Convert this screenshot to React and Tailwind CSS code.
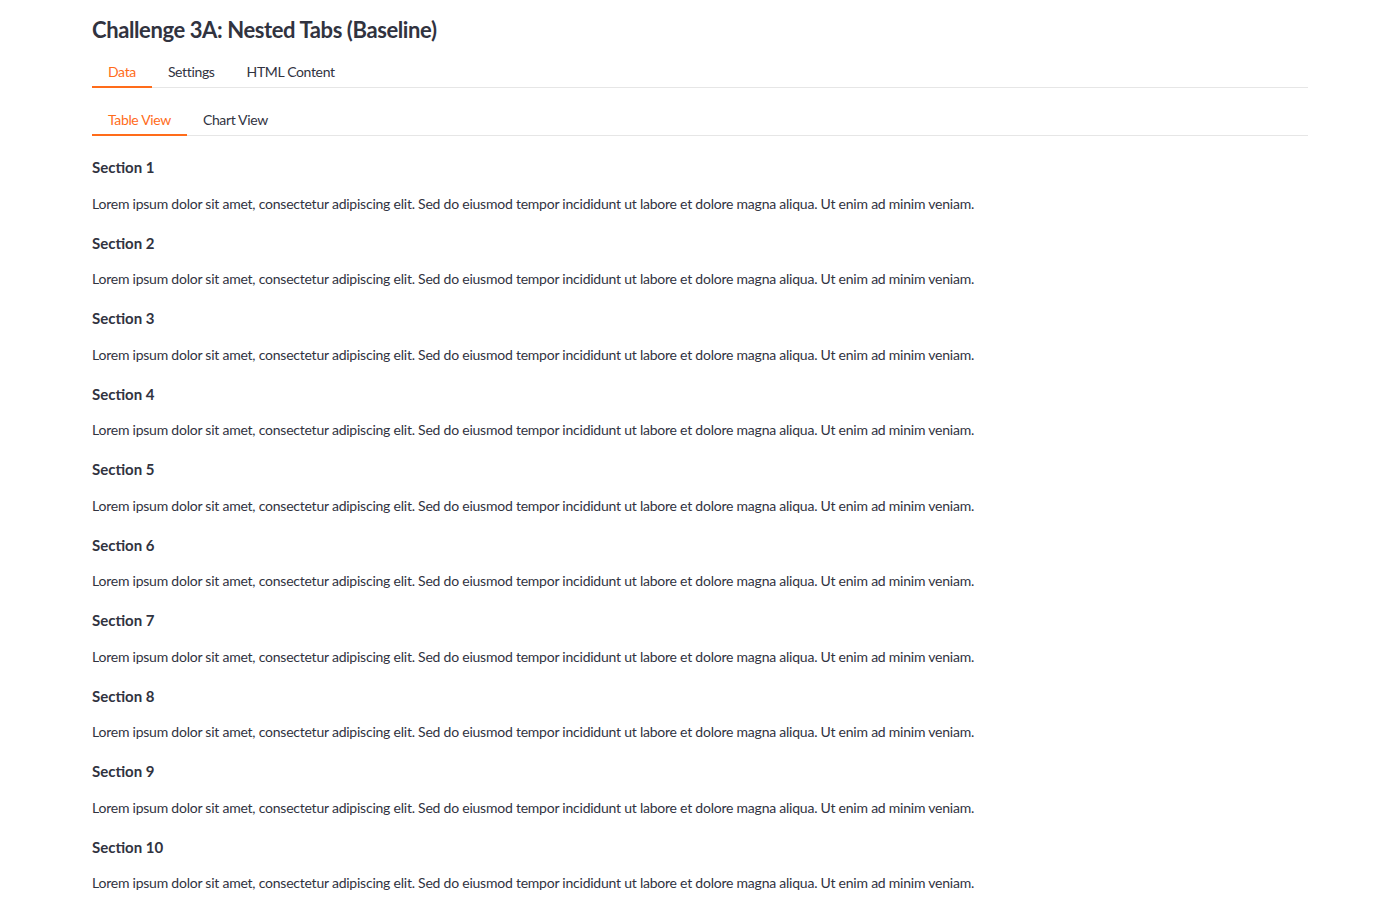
import React, { useState } from 'react';

const LOREM =
  'Lorem ipsum dolor sit amet, consectetur adipiscing elit. Sed do eiusmod tempor incididunt ut labore et dolore magna aliqua. Ut enim ad minim veniam.';

const Tabs = ({ items, active, onChange }) => (
  <div className="flex border-b border-[#e6e6e6]">
    {items.map((item) => (
      <button
        key={item}
        onClick={() => onChange(item)}
        className={
          item === active
            ? 'h-8 px-4 pt-[2px] -mb-px border-b-2 border-[#ff6c1a] text-[#ff6c1a] text-sm tracking-[-0.35px]'
            : 'h-8 px-4 pt-[2px] -mb-px border-b-2 border-transparent text-[#31333f] text-sm tracking-[-0.35px]'
        }
      >
        {item}
      </button>
    ))}
  </div>
);

const App = () => {
  const [tab, setTab] = useState('Data');
  const [sub, setSub] = useState('Table View');
  const sections = Array.from({ length: 10 }, (_, i) => i + 1);

  return (
    <div className="min-h-screen bg-white text-[#31333f] font-['Lato',sans-serif]">
      <div className="mx-[92px] pt-4">
        <h1 className="text-[22px] leading-7 font-bold tracking-[-0.4px]">Challenge 3A: Nested Tabs (Baseline)</h1>
        <div className="mt-3">
          <Tabs items={['Data', 'Settings', 'HTML Content']} active={tab} onChange={setTab} />
        </div>
        <div className="mt-4">
          <Tabs items={['Table View', 'Chart View']} active={sub} onChange={setSub} />
        </div>
        <div className="pt-[19px] flex flex-col gap-[17px]">
          {sections.map((n) => (
            <section key={n}>
              <h3 className="text-[15px] leading-6 font-bold">Section {n}</h3>
              <p className="mt-[13.5px] text-sm leading-[21px] tracking-[-0.23px]">{LOREM}</p>
            </section>
          ))}
        </div>
      </div>
    </div>
  );
};

export default App;
